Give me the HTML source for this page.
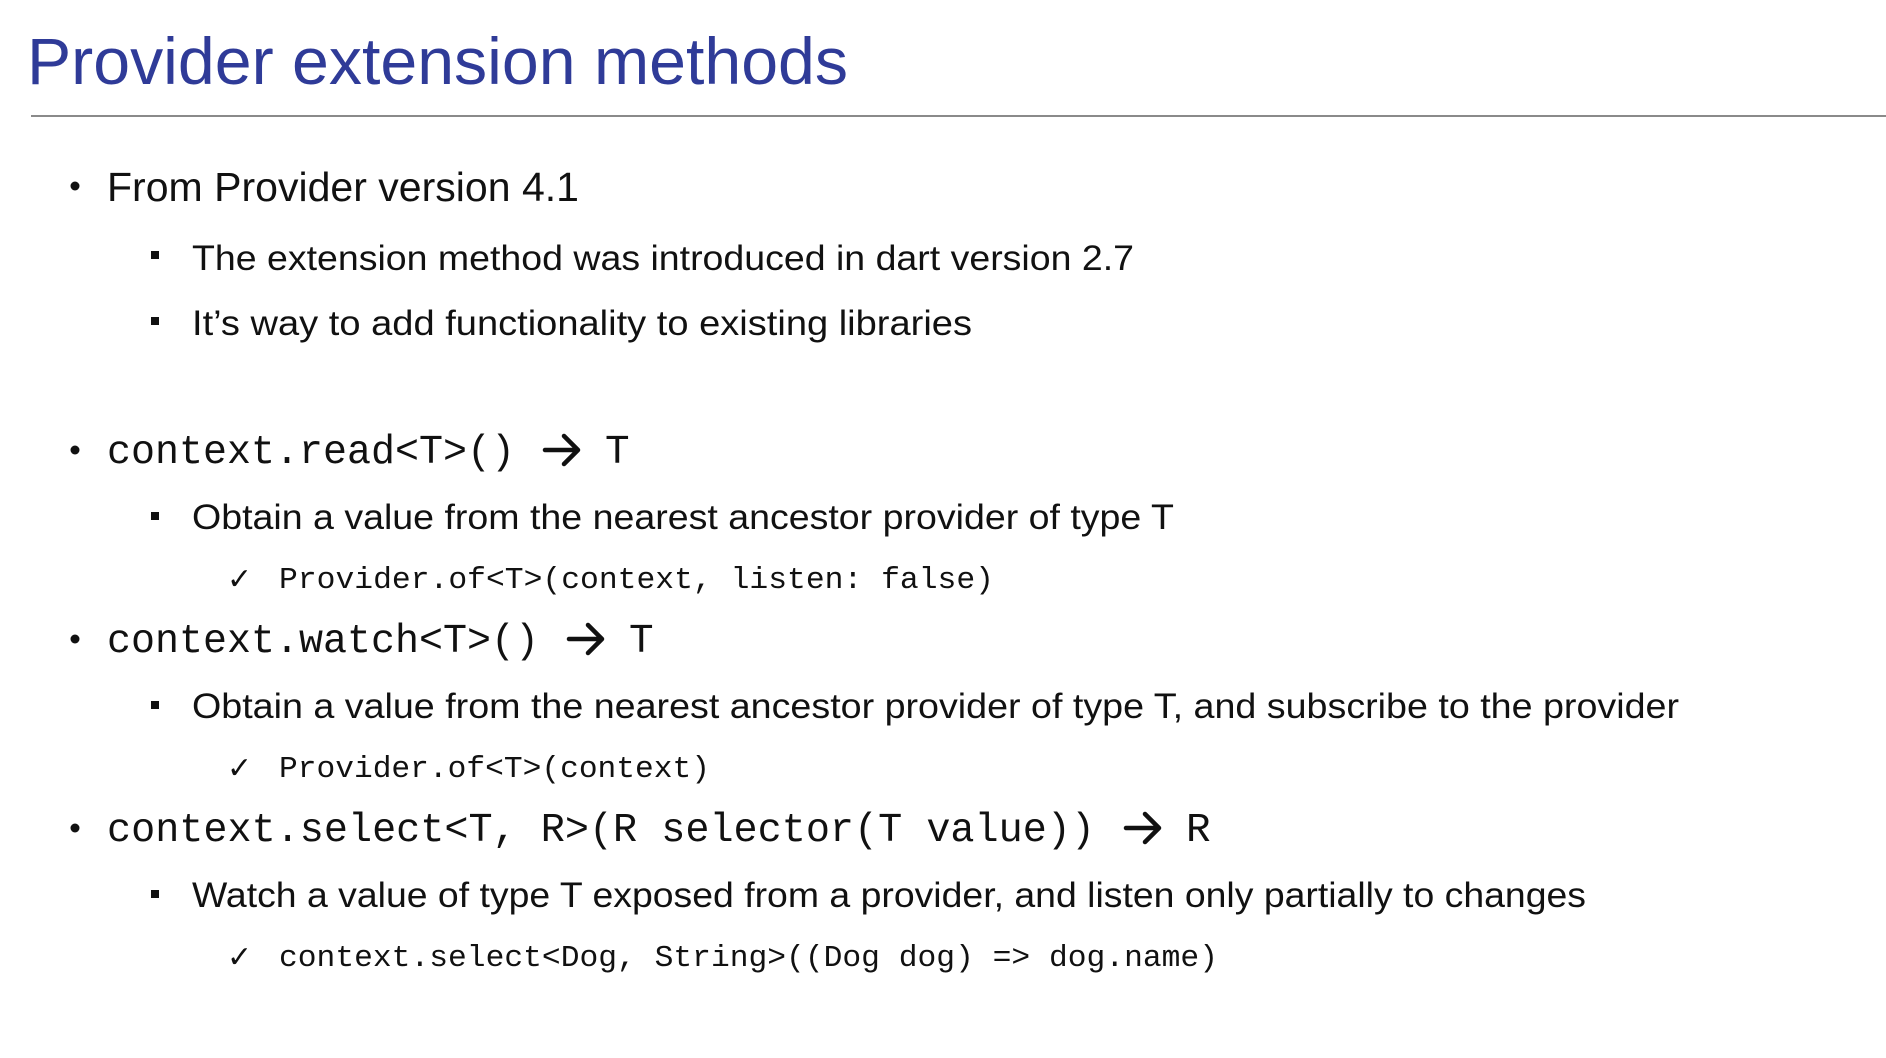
<!DOCTYPE html>
<html><head><meta charset="utf-8"><style>
html,body{margin:0;padding:0;background:#fff;width:1886px;height:1058px;overflow:hidden}
svg{display:block}
.s{font-family:"Liberation Sans",sans-serif;fill:#111}
.m{font-family:"Liberation Mono",monospace;fill:#111}
.a{fill:none;stroke:#111;stroke-width:4.5;stroke-linecap:round;stroke-linejoin:round}
</style></head><body>
<svg width="1886" height="1058" viewBox="0 0 1886 1058" xmlns="http://www.w3.org/2000/svg">
<text x="27" y="84" class="s" style="fill:#2f3b98" font-size="66" textLength="821" lengthAdjust="spacingAndGlyphs">Provider extension methods</text>
<rect x="31" y="115" width="1855" height="2" fill="#8a8a8a"/>

<circle cx="75" cy="186" r="4.5" fill="#111"/>
<text x="107" y="201" class="s" font-size="41" textLength="472" lengthAdjust="spacingAndGlyphs">From Provider version 4.1</text>

<rect x="151" y="251" width="8" height="8" fill="#111"/>
<text x="192" y="270" class="s" font-size="35" textLength="942" lengthAdjust="spacingAndGlyphs">The extension method was introduced in dart version 2.7</text>
<rect x="151" y="317" width="8" height="8" fill="#111"/>
<text x="192" y="335" class="s" font-size="35" textLength="780" lengthAdjust="spacingAndGlyphs">It’s way to add functionality to existing libraries</text>

<circle cx="75" cy="450" r="4.5" fill="#111"/>
<text x="107" y="463" class="m" font-size="41" textLength="408" lengthAdjust="spacingAndGlyphs">context.read&lt;T&gt;()</text>
<path class="a" d="M545 450H578M564 436L578 450L564 464"/>
<text x="605" y="463" class="m" font-size="41">T</text>
<rect x="151" y="512" width="8" height="8" fill="#111"/>
<text x="192" y="529" class="s" font-size="35" textLength="982" lengthAdjust="spacingAndGlyphs">Obtain a value from the nearest ancestor provider of type T</text>
<text x="227" y="589" class="s" font-size="30">✓</text>
<text x="279" y="588" class="m" font-size="31" textLength="715" lengthAdjust="spacingAndGlyphs">Provider.of&lt;T&gt;(context, listen: false)</text>

<circle cx="75" cy="639" r="4.5" fill="#111"/>
<text x="107" y="652" class="m" font-size="41" textLength="432" lengthAdjust="spacingAndGlyphs">context.watch&lt;T&gt;()</text>
<path class="a" d="M569 639H602M588 625L602 639L588 653"/>
<text x="629" y="652" class="m" font-size="41">T</text>
<rect x="151" y="701" width="8" height="8" fill="#111"/>
<text x="192" y="718" class="s" font-size="35" textLength="1487" lengthAdjust="spacingAndGlyphs">Obtain a value from the nearest ancestor provider of type T, and subscribe to the provider</text>
<text x="227" y="778" class="s" font-size="30">✓</text>
<text x="279" y="777" class="m" font-size="31" textLength="431" lengthAdjust="spacingAndGlyphs">Provider.of&lt;T&gt;(context)</text>

<circle cx="75" cy="828" r="4.5" fill="#111"/>
<text x="107" y="841" class="m" font-size="41" textLength="988" lengthAdjust="spacingAndGlyphs">context.select&lt;T, R&gt;(R selector(T value))</text>
<path class="a" d="M1126 828H1159M1145 814L1159 828L1145 842"/>
<text x="1186" y="841" class="m" font-size="41">R</text>
<rect x="151" y="890" width="8" height="8" fill="#111"/>
<text x="192" y="907" class="s" font-size="35" textLength="1394" lengthAdjust="spacingAndGlyphs">Watch a value of type T exposed from a provider, and listen only partially to changes</text>
<text x="227" y="967" class="s" font-size="30">✓</text>
<text x="279" y="966" class="m" font-size="31" textLength="939" lengthAdjust="spacingAndGlyphs">context.select&lt;Dog, String&gt;((Dog dog) =&gt; dog.name)</text>
</svg>
</body></html>
